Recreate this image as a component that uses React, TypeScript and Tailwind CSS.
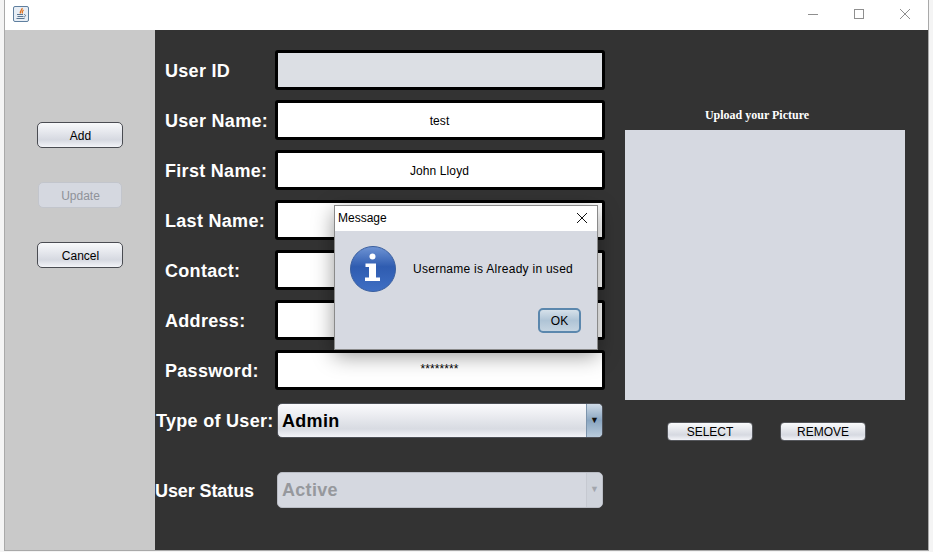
const labelClass = "text-[18px] font-bold text-white leading-none whitespace-nowrap";

const NimbusButton = ({ label, disabled }: { label: string; disabled?: boolean }) => (
  <div
    className={
      disabled
        ? "w-[84px] h-[26px] mx-px pt-px pl-px flex items-center justify-center rounded-[5px] border border-[#c2c5cc] bg-[#d5d8e0] text-[12px] text-[#8f9299]"
        : "w-[86px] h-[26px] pt-px pl-px flex items-center justify-center rounded-[5px] border border-[#4a4c52] bg-gradient-to-b from-[#f8f9fb] via-[#d6d9e1] via-70% to-[#f3f4f8] text-[12px] text-black"
    }
  >
    {label}
  </div>
);

const SmallButton = ({ label }: { label: string }) => (
  <div className="w-[86px] h-[19px] flex items-center justify-center rounded-[4px] border border-[#55575c] bg-gradient-to-b from-[#fafbfc] via-[#d6d9e1] via-70% to-[#f3f4f8] text-[12px] text-black">
    {label}
  </div>
);

const Field = ({ label, value, disabled, masked }: { label: string; value?: string; disabled?: boolean; masked?: boolean }) => (
  <div className="flex items-center h-10 mb-2.5">
    <div className={`w-[120px] pl-2.5 pt-[2px] tracking-[0.3px] ${labelClass}`}>{label}</div>
    <div
      className={`w-[330px] h-10 flex items-center justify-center rounded-[3px] border-[3px] border-black text-[12px] tracking-[0.1px] text-black ${
        disabled ? "bg-[#dcdfe4]" : "bg-white"
      } ${masked ? "pb-[3px] pr-px" : "pt-px pr-px"}`}
    >
      {value}
    </div>
  </div>
);

const JavaIcon = () => (
  <svg width="16" height="16" viewBox="0 0 16 16">
    <rect x="0.5" y="0.5" width="15" height="15" rx="1.5" fill="#e8eef5" stroke="#5f7f9f" />
    <path d="M9 2c1 1.500-2.500 2.500-1.500 5.500M10.500 4c-1 1-2 1.500-1 3.500" fill="none" stroke="#e2711d" strokeWidth="1.3" />
    <path d="M4 8.500h6M4.500 10.500h6M3.500 12.500h8M11 8.500c2 0 2 2 0 2.500" fill="none" stroke="#5a7590" strokeWidth="1" />
  </svg>
);

const InfoIcon = () => (
  <svg width="48" height="48" viewBox="0 0 48 48">
    <defs>
      <linearGradient id="infoFill" x1="0" y1="0" x2="0" y2="1">
        <stop offset="0" stopColor="#6f94d4" />
        <stop offset="0.45" stopColor="#2f5cb0" />
        <stop offset="1" stopColor="#3f6fc4" />
      </linearGradient>
    </defs>
    <circle cx="24" cy="24" r="22.5" fill="url(#infoFill)" stroke="#3a5f9f" />
    <circle cx="23.500" cy="11.500" r="3" fill="#fff" />
    <path d="M16.500 18.500h10.500v14h4v3.500h-15v-3.500h4v-10.500h-3.500z" fill="#fff" />
  </svg>
);

const Combo = ({ label, value, disabled, className }: { label: string; value: string; disabled?: boolean; className: string }) => (
  <div className={`flex items-center ${className}`}>
    <div className={`w-[122px] ${disabled ? "pl-0 pt-[2px] tracking-[-0.1px]" : "pl-px tracking-[0.3px]"} ${labelClass}`}>{label}</div>
    <div
      className={`w-[326px] flex items-stretch rounded-[5px] border overflow-hidden ${
        disabled
          ? "h-9 border-[#b9bcc4] bg-[#d5d8e0] text-[#96989d]"
          : "h-[35px] border-[#4d5057] bg-gradient-to-b from-[#fbfbfd] via-[#d8dbe2] via-75% to-[#f3f4f8] text-black"
      }`}
    >
      <div className="flex-1 flex items-center pl-[4px] pt-px text-[18px] font-bold tracking-[0.3px]">{value}</div>
      <div
        className={`w-4 flex items-center justify-center border-l text-[9px] ${
          disabled
            ? "border-[#c6c9d1] bg-[#cfd3db] text-[#a3a6ad]"
            : "border-[#7d94ac] bg-gradient-to-b from-[#cfdbe7] via-[#8aa6c1] to-[#b9cbdc] text-[#111]"
        }`}
      >
        ▼
      </div>
    </div>
  </div>
);

export default function App() {
  return (
    <div className="relative w-[933px] h-[552px] overflow-hidden bg-[#f4f4f4] font-['Liberation_Sans',Arial,sans-serif]">
      <div className="ml-1 w-[925px] h-[551px] border-x border-b border-[#a9a9a9] flex flex-col">
        {/* title bar */}
        <div className="h-[30px] bg-white flex items-center justify-between shrink-0">
          <div className="pl-2 pb-[2px]">
            <JavaIcon />
          </div>
          <div className="flex items-center pb-[2px]">
            <svg width="46" height="12" viewBox="0 0 46 12">
              <path d="M1 6.500h10" stroke="#8f8f8f" />
            </svg>
            <svg width="46" height="12" viewBox="0 0 46 12">
              <rect x="1.500" y="1.500" width="9" height="9" fill="none" stroke="#8f8f8f" />
            </svg>
            <svg width="23" height="12" viewBox="0 0 23 12" className="mr-[6px]">
              <path d="M1 1l10 10M11 1L1 11" stroke="#8f8f8f" />
            </svg>
          </div>
        </div>

        <div className="flex-1 flex min-h-0">
          {/* actions */}
          <div className="w-[150px] bg-[#c9c9c9] flex flex-col gap-[34px] pt-[92px] pl-8">
            <NimbusButton label="Add" />
            <NimbusButton label="Update" disabled />
            <NimbusButton label="Cancel" />
          </div>

          <div className="flex-1 bg-[#333333] flex">
            {/* form */}
            <div className="w-[470px] pt-5">
              <Field label="User ID" disabled />
              <Field label="User Name:" value="test" />
              <Field label="First Name:" value="John Lloyd" />
              <Field label="Last Name:" />
              <Field label="Contact:" />
              <Field label="Address:" />
              <Field label="Password:" value="********" masked />
              <Combo label="Type of User:" value="Admin" className="mt-[13px]" />
              <Combo label="User Status" value="Active" disabled className="mt-[34px]" />
            </div>

            {/* picture */}
            <div className="w-[280px] flex flex-col">
              <div className="mt-[78px] h-[22px] pr-4 text-center font-['Liberation_Serif',serif] text-[12px] font-bold text-white leading-[14px]">
                Upload your Picture
              </div>
              <div className="w-[280px] h-[270px] bg-[#d6d9e1]" />
              <div className="flex gap-[27px] mt-[22px] pl-[42px]">
                <SmallButton label="SELECT" />
                <SmallButton label="REMOVE" />
              </div>
            </div>
          </div>
        </div>
      </div>

      {/* message dialog */}
      <div className="absolute left-[334px] top-[205px] w-[264px] h-[145px] border border-[#8a8a8a] bg-[#d6d9e1] shadow-[0_6px_20px_rgba(0,0,0,0.4)] flex flex-col">
        <div className="h-[25px] bg-white flex items-center justify-between pl-[3px] pr-[9px] pb-px text-[12px] text-black">
          <span>Message</span>
          <svg width="12" height="12" viewBox="0 0 12 12">
            <path d="M1 1l10 10M11 1L1 11" stroke="#111" />
          </svg>
        </div>
        <div className="flex items-center pl-[14px] pt-[14px]">
          <InfoIcon />
          <span className="ml-[16px] text-[12px] tracking-[0.27px] text-black">Username is Already in used</span>
        </div>
        <div className="flex justify-end pr-4 pt-[15px]">
          <div className="w-[43px] h-[25px] flex items-center justify-center rounded-[5px] border-2 border-[#5b87ad] bg-gradient-to-b from-[#d6e1ea] via-[#afc4d6] to-[#c5d4e1] text-[12px] text-black">
            OK
          </div>
        </div>
      </div>
    </div>
  );
}
